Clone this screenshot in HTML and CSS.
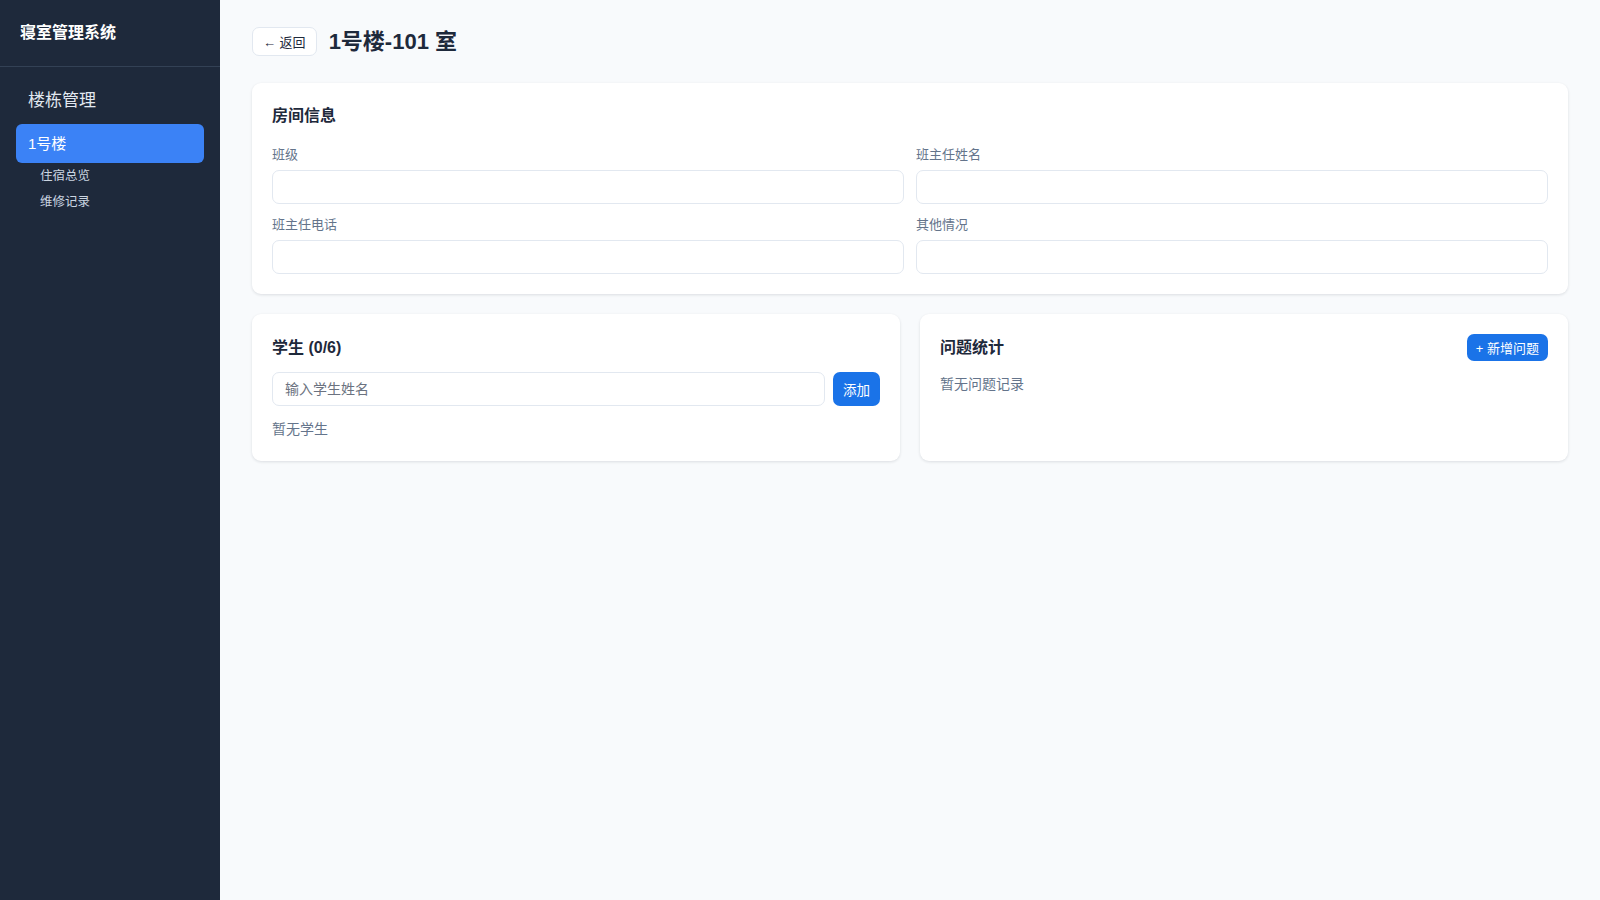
FILE: index.html
```html
<!DOCTYPE html>
<html lang="zh-CN">
<head>
    <meta charset="UTF-8">
    <meta name="viewport" content="width=device-width, initial-scale=1.0">
    <title>寝室管理系统</title>
    <link rel="stylesheet" href="styles.css">
</head>
<body>
    <aside class="sidebar">
        <div class="brand">寝室管理系统</div>
        <nav class="nav">
            <div class="nav-group">楼栋管理</div>
            <a class="nav-item active" href="#">1号楼</a>
            <a class="nav-sub" href="#">住宿总览</a>
            <a class="nav-sub" href="#">维修记录</a>
        </nav>
    </aside>

    <main class="main">
        <div class="page-header">
            <button class="btn-back">← 返回</button>
            <h1>1号楼-101 室</h1>
        </div>

        <section class="card">
            <h2 class="card-title">房间信息</h2>
            <div class="form-grid">
                <div class="form-group">
                    <label>班级</label>
                    <input type="text">
                </div>
                <div class="form-group">
                    <label>班主任姓名</label>
                    <input type="text">
                </div>
                <div class="form-group">
                    <label>班主任电话</label>
                    <input type="text">
                </div>
                <div class="form-group">
                    <label>其他情况</label>
                    <input type="text">
                </div>
            </div>
        </section>

        <div class="two-col">
            <section class="card card-list">
                <div class="card-head">
                    <h2 class="card-title">学生 (0/6)</h2>
                </div>
                <div class="add-row">
                    <input type="text" placeholder="输入学生姓名">
                    <button class="btn-primary">添加</button>
                </div>
                <p class="empty">暂无学生</p>
            </section>

            <section class="card card-list">
                <div class="card-head">
                    <h2 class="card-title">问题统计</h2>
                    <button class="btn-primary btn-sm">+ 新增问题</button>
                </div>
                <p class="empty">暂无问题记录</p>
            </section>
        </div>
    </main>
</body>
</html>
```
FILE: styles.css
```css
* {
    box-sizing: border-box;
    margin: 0;
    padding: 0;
}

body {
    font-family: "Liberation Sans", "Noto Sans CJK SC", sans-serif;
    background-color: #f8fafc;
    color: #1e293b;
    display: flex;
    min-height: 100vh;
}

.sidebar {
    width: 220px;
    flex-shrink: 0;
    background-color: #1e293b;
    color: #fff;
}

.brand {
    padding: 22px 20px 22px;
    line-height: 22px;
    font-size: 16px;
    font-weight: 700;
    border-bottom: 1px solid #334155;
}

.nav {
    padding: 22px 16px 20px;
    display: flex;
    flex-direction: column;
}

.nav-group {
    font-size: 17px;
    color: #e2e8f0;
    padding: 0 12px;
    line-height: 24px;
    margin-bottom: 11px;
}

.nav-item {
    display: block;
    height: 39px;
    line-height: 39px;
    padding: 0 12px;
    border-radius: 6px;
    color: #fff;
    text-decoration: none;
    font-size: 15px;
}

.nav-item.active {
    background-color: #3b82f6;
}

.nav-sub {
    display: block;
    padding: 0 24px;
    margin-top: 3px;
    line-height: 23px;
    font-size: 12.5px;
    color: #cbd5e1;
    text-decoration: none;
}

.nav-item + .nav-sub {
    margin-top: 2px;
}

.main {
    flex: 1;
    padding: 23px 32px 24px;
}

.page-header {
    display: flex;
    align-items: center;
    gap: 12px;
    height: 36px;
    margin-bottom: 24px;
}

.btn-back {
    height: 29px;
    padding: 0 10px;
    background-color: #fff;
    border: 1px solid #e2e8f0;
    border-radius: 7px;
    font-family: inherit;
    font-size: 13px;
    color: #1e293b;
    cursor: pointer;
}

h1 {
    font-size: 22px;
    line-height: 30px;
    margin-top: 2px;
    font-weight: 700;
    color: #1e293b;
}

.card {
    background-color: #fff;
    border-radius: 9px;
    box-shadow: 0 1px 3px rgba(15, 23, 42, 0.12);
    padding: 20px;
}

.card-list {
    padding-bottom: 22px;
}

.card-title {
    font-size: 16px;
    font-weight: 700;
    line-height: 26px;
    color: #1e293b;
}

.form-grid {
    display: grid;
    grid-template-columns: 1fr 1fr;
    column-gap: 12px;
    row-gap: 11px;
    margin-top: 16px;
}

.form-group label {
    display: block;
    font-size: 13px;
    line-height: 20px;
    color: #64748b;
    margin-bottom: 5px;
}

input {
    width: 100%;
    height: 34px;
    padding: 0 12px;
    border: 1px solid #e2e8f0;
    border-radius: 7px;
    font-family: inherit;
    font-size: 14px;
    color: #1e293b;
    background-color: #fff;
    outline: none;
}

input::placeholder {
    color: #6b7280;
}

.two-col {
    display: grid;
    grid-template-columns: 1fr 1fr;
    gap: 20px;
    margin-top: 20px;
}

.card-head {
    display: flex;
    align-items: center;
    justify-content: space-between;
    min-height: 27px;
    margin-bottom: 11px;
}

.add-row {
    display: flex;
    gap: 8px;
}

.add-row input {
    flex: 1;
}

.btn-primary {
    height: 34px;
    padding: 0 10px;
    background-color: #1a73e8;
    color: #fff;
    border: none;
    border-radius: 7px;
    font-family: inherit;
    font-size: 13.5px;
    cursor: pointer;
}

.btn-sm {
    height: 27px;
    padding: 0 9px;
    font-size: 13px;
}

.empty {
    margin-top: 13px;
    font-size: 14px;
    line-height: 20px;
    color: #64748b;
}

.card-head + .empty {
    margin-top: 13px;
}
```
